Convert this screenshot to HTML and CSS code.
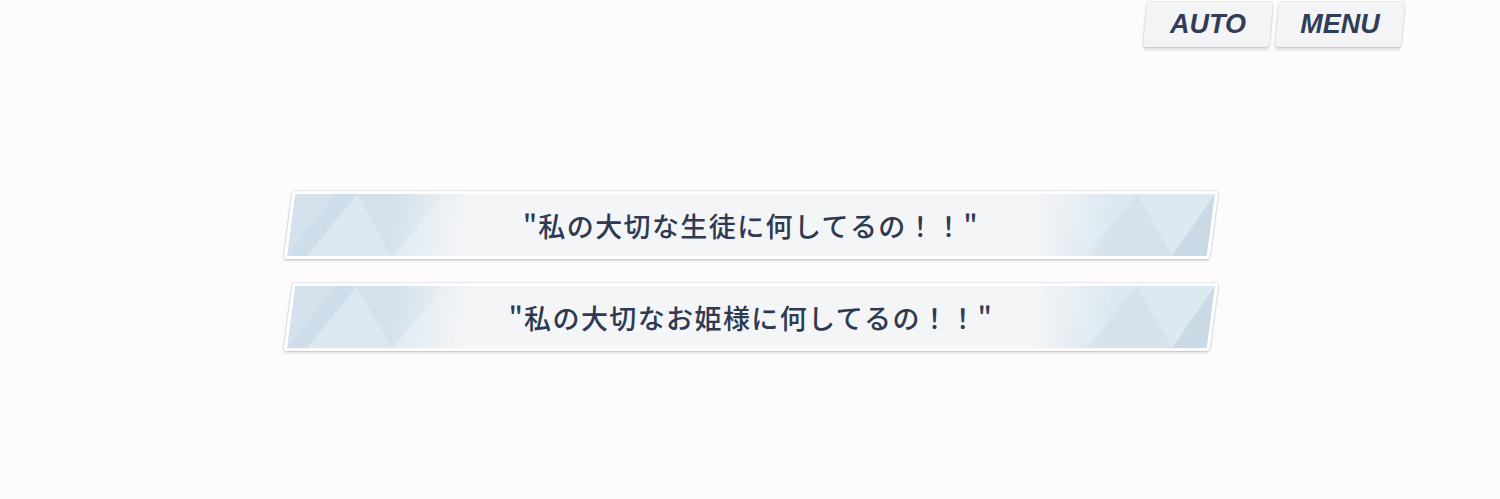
FILE: index.html
```html
<!DOCTYPE html>
<html lang="ja">
  <head>
    <meta charset="UTF-8" />
    <meta name="viewport" content="width=device-width, initial-scale=1.0" />
    <title>選択肢</title>
    <link rel="stylesheet" href="styles.css">
  </head>

  <body>
    <div class="screen">
      <!-- 右上のメニュー -->
      <header class="toolbar">
        <button class="tool-btn"><span>AUTO</span></button>
        <button class="tool-btn"><span>MENU</span></button>
      </header>

      <!-- 選択肢 -->
      <main class="choices">
        <button class="choice">
          <svg class="choice-bg" viewBox="0 0 920 62" preserveAspectRatio="none" aria-hidden="true">
            <defs>
              <linearGradient id="fade1" x1="0" x2="1" y1="0" y2="0">
                <stop offset="0" stop-color="#fff" />
                <stop offset="0.11" stop-color="#fff" />
                <stop offset="0.19" stop-color="#000" />
                <stop offset="0.81" stop-color="#000" />
                <stop offset="0.89" stop-color="#fff" />
                <stop offset="1" stop-color="#fff" />
              </linearGradient>
              <mask id="edges1">
                <rect width="920" height="62" fill="url(#fade1)" />
              </mask>
            </defs>
            <g mask="url(#edges1)">
              <rect width="920" height="62" fill="#cddde9" />
              <polygon points="0,62 40,0 -40,0" fill="#d3e2ec" />
              <polygon points="62,0 20,62 105,62" fill="#dbe8f1" />
              <polygon points="62,0 150,0 105,62" fill="#d2e1eb" />
              <polygon points="150,0 105,62 190,62" fill="#dde9f1" />
              <polygon points="150,0 235,0 190,62" fill="#d6e3ec" />
              <polygon points="842,0 800,62 885,62" fill="#d4e2ec" />
              <polygon points="842,0 760,0 800,62" fill="#dce8f1" />
              <polygon points="760,0 720,62 800,62" fill="#d8e5ee" />
              <polygon points="920,0 885,62 960,62" fill="#c9dae6" />
              <polygon points="842,0 920,0 885,62" fill="#dde9f1" />
            </g>
          </svg>
          <span class="choice-text">"私の大切な生徒に何してるの！！"</span>
        </button>

        <button class="choice">
          <svg class="choice-bg" viewBox="0 0 920 62" preserveAspectRatio="none" aria-hidden="true">
            <defs>
              <linearGradient id="fade2" x1="0" x2="1" y1="0" y2="0">
                <stop offset="0" stop-color="#fff" />
                <stop offset="0.11" stop-color="#fff" />
                <stop offset="0.19" stop-color="#000" />
                <stop offset="0.81" stop-color="#000" />
                <stop offset="0.89" stop-color="#fff" />
                <stop offset="1" stop-color="#fff" />
              </linearGradient>
              <mask id="edges2">
                <rect width="920" height="62" fill="url(#fade2)" />
              </mask>
            </defs>
            <g mask="url(#edges2)">
              <rect width="920" height="62" fill="#cddde9" />
              <polygon points="0,62 40,0 -40,0" fill="#d3e2ec" />
              <polygon points="62,0 20,62 105,62" fill="#dbe8f1" />
              <polygon points="62,0 150,0 105,62" fill="#d2e1eb" />
              <polygon points="150,0 105,62 190,62" fill="#dde9f1" />
              <polygon points="150,0 235,0 190,62" fill="#d6e3ec" />
              <polygon points="842,0 800,62 885,62" fill="#d4e2ec" />
              <polygon points="842,0 760,0 800,62" fill="#dce8f1" />
              <polygon points="760,0 720,62 800,62" fill="#d8e5ee" />
              <polygon points="920,0 885,62 960,62" fill="#c9dae6" />
              <polygon points="842,0 920,0 885,62" fill="#dde9f1" />
            </g>
          </svg>
          <span class="choice-text">"私の大切なお姫様に何してるの！！"</span>
        </button>
      </main>
    </div>
  </body>
</html>
```

FILE: styles.css
```css
body {
  margin: 0;
  background-color: #fdfbfc;
  font-family: "Noto Sans CJK JP", "Noto Sans", sans-serif;
  color: #2e3a52;
}

.screen {
  width: 1500px;
  height: 499px;
  overflow: hidden;
}

/* ---- メニュー ---- */
.toolbar {
  display: flex;
  justify-content: flex-end;
  gap: 6px;
  padding: 2px 97px 0 0;
}

.tool-btn {
  width: 126px;
  height: 45px;
  padding: 0;
  border: none;
  border-radius: 3px;
  background-color: #f3f4f6;
  box-shadow: 0 3px 3px rgba(0, 0, 0, 0.12), 0 0 0 1px rgba(224, 226, 232, 0.7);
  transform: skewX(-5deg);
  cursor: pointer;
}

.tool-btn span {
  display: block;
  font-family: "Liberation Sans", Arial, sans-serif;
  font-size: 27px;
  font-weight: bold;
  font-style: italic;
  color: #2f3d58;
  transform: skewX(5deg);
}

/* ---- 選択肢 ---- */
.choices {
  display: flex;
  flex-direction: column;
  align-items: center;
  gap: 24px;
  margin-top: 144px;
  padding-left: 1px;
}

.choice {
  position: relative;
  width: 926px;
  height: 68px;
  padding: 0;
  border: 3px solid #ffffff;
  border-radius: 3px;
  background-color: #f4f5f7;
  box-shadow: 0 2px 3px rgba(0, 0, 0, 0.13), 0 0 0 1px rgba(214, 218, 226, 0.6);
  transform: skewX(-7.5deg);
  overflow: hidden;
  cursor: pointer;
}

.choice-bg {
  position: absolute;
  inset: 0;
  width: 100%;
  height: 100%;
}

.choice-text {
  position: relative;
  display: block;
  font-family: "Noto Sans CJK JP", sans-serif;
  font-size: 27px;
  font-weight: 500;
  letter-spacing: 1.4px;
  color: #2e3a52;
  transform: skewX(7.5deg);
}
```
